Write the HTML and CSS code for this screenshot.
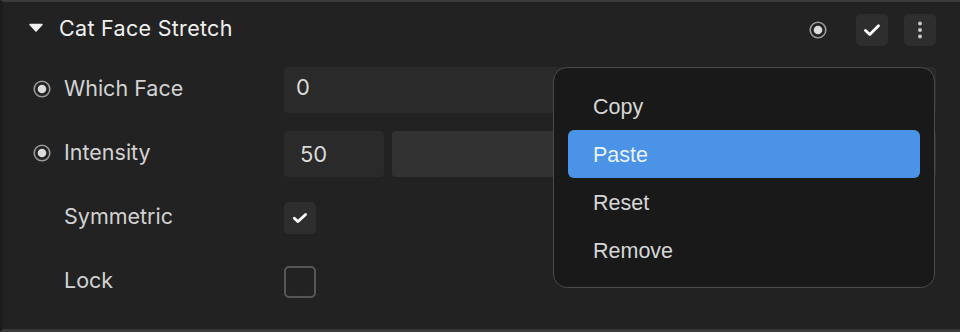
FILE: index.html
```html
<!DOCTYPE html>
<html>
<head>
<meta charset="utf-8">
<link rel="stylesheet" href="styles.css">
</head>
<body>
<div class="panel">
  <div class="header">
    <div class="heading">
      <svg class="caret" width="14" height="9" viewBox="0 0 14 9"><path d="M1 1.5 L13 1.5 L7 8 Z" fill="#f2f2f2" stroke="#f2f2f2" stroke-width="1.5" stroke-linejoin="round"/></svg>
      <span class="title">Cat Face Stretch</span>
    </div>
    <div class="header-actions">
      <svg class="radio hdr-radio" width="18" height="18" viewBox="0 0 18 18"><circle cx="9" cy="9" r="7.8" fill="none" stroke="#9a9a9a" stroke-width="1.6"/><circle cx="9" cy="9" r="4.3" fill="#dcdcdc"/></svg>
      <div class="icon-btn">
        <svg width="18" height="14" viewBox="0 0 18 14"><path d="M2.5 7.5 L6.8 11.5 L15.5 2.8" fill="none" stroke="#fff" stroke-width="2.8" stroke-linecap="round" stroke-linejoin="round"/></svg>
      </div>
      <div class="icon-btn">
        <svg width="6" height="20" viewBox="0 0 6 20"><circle cx="3" cy="3.5" r="2" fill="#c8c8c8"/><circle cx="3" cy="10" r="2" fill="#c8c8c8"/><circle cx="3" cy="16.5" r="2" fill="#c8c8c8"/></svg>
      </div>
    </div>
  </div>

  <div class="row">
    <div class="lead"><svg class="radio" width="18" height="18" viewBox="0 0 18 18"><circle cx="9" cy="9" r="7.8" fill="none" stroke="#9a9a9a" stroke-width="1.6"/><circle cx="9" cy="9" r="4.3" fill="#dcdcdc"/></svg></div>
    <div class="label">Which Face</div>
    <div class="control"><div class="field wide">0</div></div>
  </div>

  <div class="row">
    <div class="lead"><svg class="radio" width="18" height="18" viewBox="0 0 18 18"><circle cx="9" cy="9" r="7.8" fill="none" stroke="#9a9a9a" stroke-width="1.6"/><circle cx="9" cy="9" r="4.3" fill="#dcdcdc"/></svg></div>
    <div class="label">Intensity</div>
    <div class="control">
      <div class="field num">50</div>
      <div class="slider"></div>
    </div>
  </div>

  <div class="row">
    <div class="lead"></div>
    <div class="label">Symmetric</div>
    <div class="control">
      <div class="checkbox checked">
        <svg width="16" height="12" viewBox="0 0 16 12"><path d="M2.3 6.3 L6 9.6 L13.6 2.4" fill="none" stroke="#fff" stroke-width="2.8" stroke-linecap="round" stroke-linejoin="round"/></svg>
      </div>
    </div>
  </div>

  <div class="row">
    <div class="lead"></div>
    <div class="label">Lock</div>
    <div class="control"><div class="checkbox empty"></div></div>
  </div>

  <div class="menu">
    <div class="menu-item">Copy</div>
    <div class="menu-item active">Paste</div>
    <div class="menu-item">Reset</div>
    <div class="menu-item">Remove</div>
  </div>
</div>
</body>
</html>
```

FILE: styles.css
```css
html, body {
  margin: 0;
  padding: 0;
  background: #222222;
}
body {
  width: 960px;
  height: 332px;
  overflow: hidden;
  font-family: Inter, "Noto Sans", sans-serif;
}
.panel {
  position: relative;
  box-sizing: border-box;
  width: 960px;
  height: 332px;
  background: #222222;
  border-top: 2px solid #3a3a3a;
  border-left: 3px solid #1c1c1c;
  border-bottom: 3px solid #3a3a3a;
  padding: 0 24px 0 26px;
}
.header {
  display: flex;
  align-items: center;
  height: 56px;
}
.heading {
  display: flex;
  align-items: center;
  margin-bottom: 5px;
}
.caret {
  margin-right: 16px;
}
.title {
  color: #f0f0f0;
  font-size: 21.5px;
  font-weight: 400;
  letter-spacing: 0.3px;
}
.header-actions {
  margin-left: auto;
  display: flex;
  align-items: center;
}
.hdr-radio {
  margin-right: 13px;
}
.icon-btn {
  width: 32px;
  height: 32px;
  border-radius: 5px;
  background: #2e2e2e;
  display: flex;
  align-items: center;
  justify-content: center;
  margin-left: 16px;
}
.row {
  display: flex;
  align-items: center;
  height: 64px;
}
.lead {
  width: 35px;
  display: flex;
  align-items: center;
  padding-left: 4px;
  box-sizing: border-box;
  margin-top: -2px;
}
.label {
  width: 220px;
  color: #d2d2d2;
  font-size: 21.5px;
  margin-top: -4px;
}
.control {
  flex: 1;
  display: flex;
  align-items: center;
  gap: 8px;
}
.field {
  box-sizing: border-box;
  height: 46px;
  border-radius: 4px;
  background: #2a2a2a;
  color: #dadada;
  font-size: 22px;
  display: flex;
  align-items: center;
  padding-left: 12px;
}
.field.wide {
  flex: 1;
  padding-bottom: 6px;
}
.field.num {
  width: 100px;
  padding-left: 16px;
}
.slider {
  flex: 1;
  height: 46px;
  border-radius: 4px;
  background: #323232;
}
.checkbox {
  box-sizing: border-box;
  width: 32px;
  height: 32px;
  border-radius: 5px;
  display: flex;
  align-items: center;
  justify-content: center;
}
.checkbox.checked {
  background: #2e2e2e;
}
.checkbox.empty {
  border: 2px solid #575757;
}
.menu {
  position: absolute;
  left: 550px;
  top: 65px;
  width: 382px;
  box-sizing: border-box;
  background: #191919;
  border: 1.5px solid #4a4a4a;
  border-radius: 14px;
  padding: 14px 14px 13px;
  font-family: "Liberation Sans", Arial, sans-serif;
}
.menu-item {
  box-sizing: border-box;
  height: 48px;
  display: flex;
  align-items: center;
  padding: 3px 0 0 25px;
  border-radius: 6px;
  color: #d6d6d6;
  font-size: 21.5px;
}
.menu-item.active {
  background: #4a93e6;
  color: #e9f1fb;
}
```
